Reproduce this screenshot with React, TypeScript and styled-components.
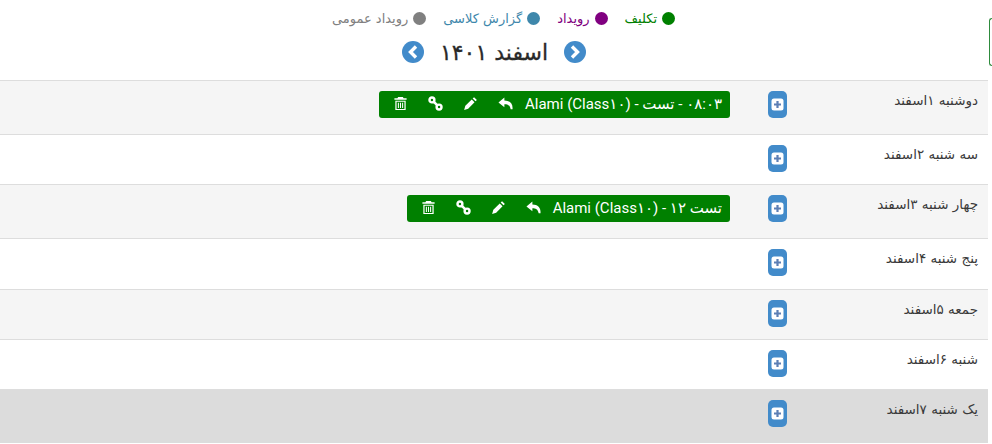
import React from 'react';
import styled, { createGlobalStyle } from 'styled-components';

const GlobalStyle = createGlobalStyle`
  html, body {
    margin: 0;
    padding: 0;
    background: #fff;
    overflow: hidden;
  }
  body {
    font-family: "DejaVu Sans", "Noto Sans", sans-serif;
    color: #333;
  }
`;

const SPage = styled.div`
  width: 992px;
  height: 444px;
  overflow: hidden;
  position: relative;
`;

const STab = styled.div`
  position: absolute;
  right: 0;
  top: 18px;
  width: 3px;
  height: 48px;
  border: 1px solid #2e8b3d;
  border-right: 0;
  border-radius: 5px 0 0 5px;
  box-sizing: border-box;
`;

const SHead = styled.div`
  height: 80px;
  width: 988px;
  box-sizing: border-box;
  padding-top: 9px;
  display: flex;
  flex-direction: column;
  align-items: center;
`;

const SLegend = styled.div`
  direction: rtl;
  display: flex;
  gap: 17px;
  height: 18px;
  align-items: center;
  font-size: 13px;
  margin-left: 19px;
`;

const SLegendItem = styled.div<{ $color: string }>`
  display: flex;
  align-items: center;
  gap: 5px;
  color: ${({ $color }) => $color};
  &::before {
    content: '';
    width: 13px;
    height: 13px;
    border-radius: 50%;
    background: ${({ $color }) => $color};
  }
`;

const STitleRow = styled.div`
  direction: rtl;
  display: flex;
  align-items: center;
  gap: 16px;
  margin-top: 10px;
  height: 30px;
`;

const STitle = styled.div`
  font-size: 22px;
  font-weight: 500;
  color: #2a2a2a;
  -webkit-text-stroke: 0.3px #2a2a2a;
`;

const SNav = styled.svg`
  width: 22px;
  height: 22px;
  display: block;
`;

const STable = styled.div`
  width: 988px;
  direction: rtl;
`;

const SRow = styled.div<{ $height: number; $bg: string }>`
  height: ${({ $height }) => $height}px;
  box-sizing: border-box;
  background: ${({ $bg }) => $bg};
  border-top: 1px solid #ddd;
  display: flex;
  align-items: flex-start;
  padding-top: 10px;
`;

const SDay = styled.div`
  width: 201px;
  box-sizing: border-box;
  padding-right: 10px;
  margin-top: -1px;
  font-size: 13.5px;
  line-height: 20px;
  color: #3a3a3a;
`;

const SAddButton = styled.div`
  width: 19px;
  height: 27px;
  border-radius: 5px;
  background: #428bca;
  display: flex;
  align-items: center;
  justify-content: center;
`;

const SEvents = styled.div`
  margin-right: 38px;
  display: flex;
  flex-direction: column;
  align-items: flex-start;
`;

const SEvent = styled.div`
  height: 27px;
  box-sizing: border-box;
  background: #008000;
  border-radius: 3px;
  color: #fff;
  display: flex;
  align-items: center;
  padding: 0 8px 0 14px;
  font-family: Roboto, "DejaVu Sans", sans-serif;
  font-size: 15px;
  white-space: nowrap;
`;

const SEventText = styled.span`
  margin-left: 12px;
  margin-top: -2px;
`;

const SActions = styled.div`
  display: flex;
  align-items: center;
  gap: 20px;
  margin-top: -3px;
`;

const SIcon = styled.svg`
  width: 15px;
  height: 15px;
  display: block;
  fill: #fff;
`;

const PlusIcon = () => (
  <svg width="13" height="13" viewBox="0 0 13 13">
    <rect x="0.5" y="0.5" width="12" height="12" rx="2.5" fill="#fff" />
    <path d="M5.4 3h2.2v2.400H10v2.200H7.600V10H5.400V7.600H3V5.400h2.400z" fill="#5d7fb5" />
  </svg>
);

const NavIcon = ({ dir }: { dir: 'prev' | 'next' }) => (
  <SNav viewBox="0 0 22 22">
    <circle cx="11" cy="11" r="11" fill="#428bca" />
    <path
      d={dir === 'next' ? 'M8 5.500l5.500 5.500L8 16.500' : 'M14 5.500L8.500 11l5.500 5.500'}
      fill="none"
      stroke="#fff"
      strokeWidth="3.4"
    />
  </SNav>
);

const ReplyIcon = () => (
  <SIcon viewBox="0 0 16 16">
    <path d="M6.800 1.500L0.500 6.800l6.300 5.300V8.700c3.500 0 5.800.8 6.700 5.300h2C16 8 12.500 4.800 6.800 4.700z" />
  </SIcon>
);

const PencilIcon = () => (
  <SIcon viewBox="0 0 16 16">
    <path d="M11.800 1.200l3 3-1.500 1.500-3-3zM9.300 3.700l3 3-6.800 6.800-4.300 1.300 1.300-4.300z" />
  </SIcon>
);

const LinkIcon = () => (
  <SIcon viewBox="0 0 16 16">
    <g fill="none" stroke="#fff" strokeWidth="2.6">
      <circle cx="4.200" cy="4.200" r="2.600" />
      <circle cx="11.800" cy="11.800" r="2.600" />
      <path d="M6 6l4 4" />
    </g>
  </SIcon>
);

const TrashIcon = () => (
  <SIcon viewBox="0 0 16 16">
    <path
      d="M5.500 1h5l.8 1.500H14.500v1.500H1.500V2.500H4.700zM2.500 5h11v10h-11zM3.800 6.200v7.600h8.400V6.200zM5.200 7.200h1.100v5.600H5.200zM7.450 7.200h1.100v5.600H7.450zM9.700 7.200h1.100v5.600H9.700z"
      fillRule="evenodd"
    />
  </SIcon>
);

const Event = ({ text }: { text: string }) => (
  <SEvent>
    <SEventText>{text}</SEventText>
    <SActions>
      <ReplyIcon />
      <PencilIcon />
      <LinkIcon />
      <TrashIcon />
    </SActions>
  </SEvent>
);

const legend = [
  { label: 'تکلیف', color: '#008000' },
  { label: 'رویداد', color: '#800080' },
  { label: 'گزارش کلاسی', color: '#3e87ab' },
  { label: 'رویداد عمومی', color: '#808080' },
];

const days = [
  { label: 'دوشنبه ۱اسفند', height: 54, bg: '#f5f5f5', event: '۰۸:۰۳ - تست - (Alami (Class۱۰' },
  { label: 'سه شنبه ۲اسفند', height: 50, bg: '#fff' },
  { label: 'چهار شنبه ۳اسفند', height: 54, bg: '#f5f5f5', event: 'تست ۱۲ - (Alami (Class۱۰' },
  { label: 'پنج شنبه ۴اسفند', height: 51, bg: '#fff' },
  { label: 'جمعه ۵اسفند', height: 50, bg: '#f5f5f5' },
  { label: 'شنبه ۶اسفند', height: 50, bg: '#fff' },
  { label: 'یک شنبه ۷اسفند', height: 54, bg: '#dcdcdc' },
];

const App = () => (
  <SPage>
    <GlobalStyle />
    <STab />
    <SHead>
      <SLegend>
        {legend.map(item => (
          <SLegendItem key={item.label} $color={item.color}>
            {item.label}
          </SLegendItem>
        ))}
      </SLegend>
      <STitleRow>
        <NavIcon dir="next" />
        <STitle>اسفند ۱۴۰۱</STitle>
        <NavIcon dir="prev" />
      </STitleRow>
    </SHead>
    <STable>
      {days.map(day => (
        <SRow key={day.label} $height={day.height} $bg={day.bg}>
          <SDay>{day.label}</SDay>
          <SAddButton>
            <PlusIcon />
          </SAddButton>
          <SEvents>{day.event && <Event text={day.event} />}</SEvents>
        </SRow>
      ))}
    </STable>
  </SPage>
);

export default App;
